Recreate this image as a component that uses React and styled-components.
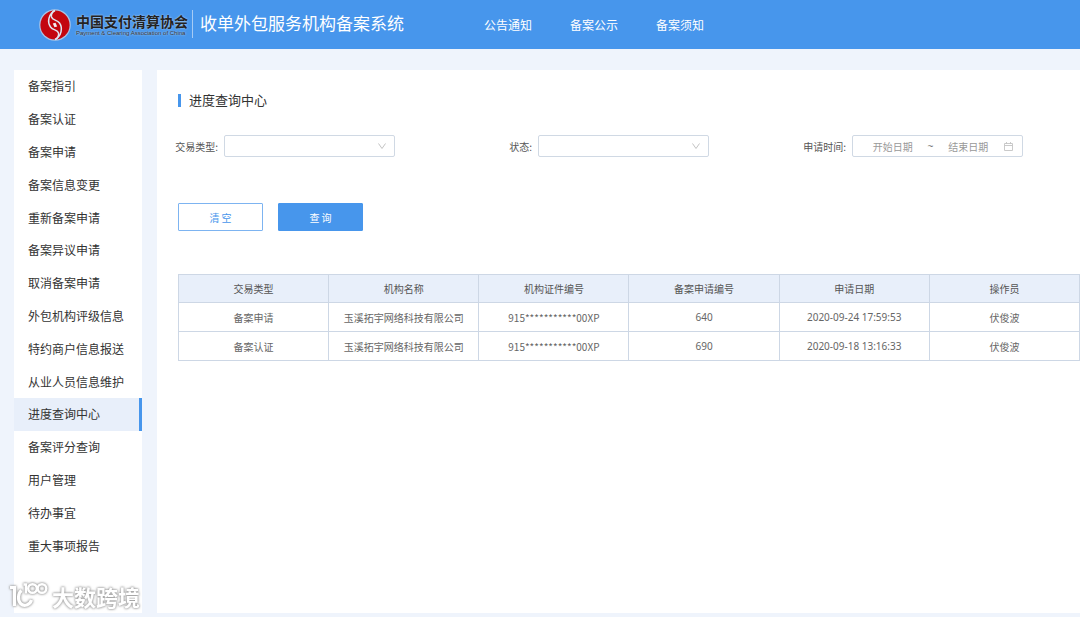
import { useState } from "react";
import styled, { createGlobalStyle } from "styled-components";

const MENU_ITEMS = [
  "备案指引",
  "备案认证",
  "备案申请",
  "备案信息变更",
  "重新备案申请",
  "备案异议申请",
  "取消备案申请",
  "外包机构评级信息",
  "特约商户信息报送",
  "从业人员信息维护",
  "进度查询中心",
  "备案评分查询",
  "用户管理",
  "待办事宜",
  "重大事项报告",
];

const NAV_ITEMS = ["公告通知", "备案公示", "备案须知"];

const COLUMNS = [
  "交易类型",
  "机构名称",
  "机构证件编号",
  "备案申请编号",
  "申请日期",
  "操作员",
];

const ROWS = [
  {
    type: "备案申请",
    org: "玉溪拓宇网络科技有限公司",
    cert: "915***********00XP",
    no: "640",
    date: "2020-09-24 17:59:53",
    operator: "伏俊波",
  },
  {
    type: "备案认证",
    org: "玉溪拓宇网络科技有限公司",
    cert: "915***********00XP",
    no: "690",
    date: "2020-09-18 13:16:33",
    operator: "伏俊波",
  },
];

const AssociationLogo = () => (
  <LogoMark viewBox="0 0 32 32" aria-hidden="true">
    <circle cx="16" cy="16" r="15.8" fill="#a9c4e6" />
    <circle cx="16" cy="16" r="14.6" fill="#c3060f" />
    <g fill="none" stroke="#dfe6f2" strokeWidth="1.5">
      <path d="M16 1.500C9.500 5 8 13 11.500 18C14 21.500 18.500 20.500 19.500 24C20 26.500 18.500 29 16.500 30.500" />
      <path d="M16 30.500C22.500 27 24 19 20.500 14C18 10.500 13.500 11.500 12.500 8C12 5.500 13.500 3 15.500 1.500" />
    </g>
    <path d="M13.800 14.500L16.500 13.800L18.200 17.500L15.500 18.200Z" fill="#f3eef2" />
  </LogoMark>
);

const ArrowIcon = () => (
  <Arrow viewBox="0 0 10 10" aria-hidden="true">
    <path d="M1.500 2.500L5 7.500L8.500 2.500" fill="none" stroke="#c4c4c4" />
  </Arrow>
);

const CalendarIcon = () => (
  <Calendar viewBox="0 0 10 10" aria-hidden="true">
    <path
      d="M1.500 2.500H9.500V9.500H1.500ZM1.500 4.500H9.500M3.500 1V3M7.500 1V3"
      fill="none"
      stroke="#c4c4c4"
      strokeWidth=".9"
    />
  </Calendar>
);

const App = () => {
  const [active, setActive] = useState("进度查询中心");
  const [type, setType] = useState("");
  const [status, setStatus] = useState("");
  const [start, setStart] = useState("");
  const [end, setEnd] = useState("");

  const onClear = () => {
    setType("");
    setStatus("");
    setStart("");
    setEnd("");
  };

  return (
    <>
      <GlobalStyle />
      <Page>
        <Header>
          <AssociationLogo />
          <Association>
            <AssociationName>中国支付清算协会</AssociationName>
            <AssociationSub>Payment &amp; Clearing Association of China</AssociationSub>
          </Association>
          <SystemName>收单外包服务机构备案系统</SystemName>
          <Nav>
            {NAV_ITEMS.map((item) => (
              <NavLink href="#" key={item}>
                {item}
              </NavLink>
            ))}
          </Nav>
        </Header>
        <Body>
          <Sidebar>
            <Menu>
              {MENU_ITEMS.map((item) => (
                <MenuItem key={item}>
                  <MenuLink
                    href="#"
                    $active={item === active}
                    onClick={() => setActive(item)}
                  >
                    {item}
                  </MenuLink>
                </MenuItem>
              ))}
            </Menu>
          </Sidebar>
          <Content>
            <Title>进度查询中心</Title>
            <Filters>
              <Field>
                <Label htmlFor="type">交易类型:</Label>
                <Control>
                  <Select
                    id="type"
                    value={type}
                    onChange={(e) => setType(e.target.value)}
                  >
                    <option value=""></option>
                  </Select>
                  <ArrowIcon />
                </Control>
              </Field>
              <Field>
                <Label htmlFor="status">状态:</Label>
                <Control>
                  <Select
                    id="status"
                    value={status}
                    onChange={(e) => setStatus(e.target.value)}
                  >
                    <option value=""></option>
                  </Select>
                  <ArrowIcon />
                </Control>
              </Field>
              <Field>
                <Label htmlFor="start">申请时间:</Label>
                <Control>
                  <DateInput
                    id="start"
                    placeholder="开始日期"
                    value={start}
                    onChange={(e) => setStart(e.target.value)}
                  />
                  <Tilde>~</Tilde>
                  <DateInput
                    aria-label="结束日期"
                    placeholder="结束日期"
                    value={end}
                    onChange={(e) => setEnd(e.target.value)}
                  />
                  <CalendarIcon />
                </Control>
              </Field>
            </Filters>
            <Actions>
              <Button type="button" onClick={onClear}>
                清 空
              </Button>
              <Button type="button" $primary>
                查 询
              </Button>
            </Actions>
            <Table>
              <thead>
                <tr>
                  {COLUMNS.map((column) => (
                    <HeadCell key={column}>{column}</HeadCell>
                  ))}
                </tr>
              </thead>
              <tbody>
                {ROWS.map((row) => (
                  <tr key={row.no}>
                    <Cell>{row.type}</Cell>
                    <Cell>{row.org}</Cell>
                    <Cell>{row.cert}</Cell>
                    <Cell $latin>{row.no}</Cell>
                    <Cell $latin>{row.date}</Cell>
                    <Cell>{row.operator}</Cell>
                  </tr>
                ))}
              </tbody>
            </Table>
          </Content>
        </Body>
      </Page>
      <Watermark>
        <WatermarkMark viewBox="0 0 40 30" aria-hidden="true">
          <g fill="none" stroke="#fff" strokeWidth="3.2">
            <path d="M1 6.500H5.500V25" />
            <path d="M12.500 9.500C9 12 8.500 19 11.500 22.500C15 26 21 24 22.500 19" />
            <path d="M14.500 3.500H17V12.500" strokeWidth="2.400" />
            <circle cx="23.500" cy="7.500" r="4.300" strokeWidth="2.400" />
            <circle cx="33" cy="7.500" r="4.300" strokeWidth="2.400" />
          </g>
        </WatermarkMark>
        <WatermarkText>大数跨境</WatermarkText>
      </Watermark>
    </>
  );
};

const GlobalStyle = createGlobalStyle`
  * {
    box-sizing: border-box;
  }
  body {
    margin: 0;
    background: #eff4fc;
    color: #333;
    font-family: "Noto Sans CJK SC", sans-serif;
    font-size: 10px;
  }
  a {
    text-decoration: none;
  }
`;

const Page = styled.div`
  display: flex;
  flex-direction: column;
  min-height: 100vh;
`;

const Header = styled.header`
  display: flex;
  align-items: center;
  height: 49px;
  padding-left: 39px;
  background: #4796ec;
  white-space: nowrap;
`;

const LogoMark = styled.svg`
  flex: none;
  width: 32px;
  height: 32px;
`;

const Association = styled.div`
  display: flex;
  flex-direction: column;
  width: 122px;
  height: 28px;
  padding: 2px 0 0 5px;
  border-right: 1px solid #a6cbf5;
  margin-bottom: 2px;
`;

const AssociationName = styled.span`
  color: #222;
  font-size: 14px;
  font-weight: 700;
  line-height: 18px;
  text-shadow: 0 0 2px #c5daf2;
`;

const AssociationSub = styled.span`
  color: #333;
  font-family: "Liberation Sans", sans-serif;
  font-size: 6px;
  line-height: 7px;
  text-shadow: 0 0 2px #dbe8f7;
`;

const SystemName = styled.span`
  width: 291px;
  padding-left: 7px;
  padding-bottom: 4px;
  color: #fff;
  font-size: 17px;
  line-height: 24px;
`;

const Nav = styled.nav`
  display: flex;
  gap: 38px;
`;

const NavLink = styled.a`
  color: #fff;
  font-size: 12px;
  line-height: 18px;
`;

const Body = styled.div`
  display: flex;
  flex: 1;
  gap: 15px;
  padding: 21px 0 4px 14px;
`;

const Sidebar = styled.aside`
  display: flex;
  flex: none;
  width: 128px;
  background: #fff;
`;

const Menu = styled.ul`
  display: grid;
  grid-auto-rows: 1fr;
  flex: 1;
  margin: 0;
  padding: 0 0 51px;
  list-style: none;
`;

const MenuItem = styled.li`
  display: flex;
`;

const MenuLink = styled.a`
  display: flex;
  flex: 1;
  align-items: center;
  padding-left: 14px;
  border-right: 3px solid ${({ $active }) => ($active ? "#4796ec" : "transparent")};
  background: ${({ $active }) => ($active ? "#e8effa" : "transparent")};
  color: #333;
  font-size: 12px;
  line-height: 18px;
`;

const Content = styled.main`
  flex: 1;
  min-width: 0;
  padding: 20px 0 20px 21px;
  background: #fff;
`;

const Title = styled.h1`
  display: flex;
  align-items: center;
  gap: 8px;
  margin: 0;
  font-size: 13px;
  font-weight: 400;
  line-height: 20px;

  &::before {
    content: "";
    width: 3px;
    height: 13px;
    background: #4796ec;
  }
`;

const Filters = styled.form`
  display: flex;
  justify-content: space-between;
  margin: 25px 57px 0 -4px;
`;

const Field = styled.div`
  display: flex;
  align-items: center;
`;

const Label = styled.label`
  width: 50px;
  padding-right: 6px;
  color: #555;
  text-align: right;
  white-space: nowrap;
`;

const Control = styled.div`
  display: flex;
  align-items: center;
  position: relative;
  width: 171px;
  height: 22px;
  border: 1px solid #d0d9e4;
  border-radius: 2px;
`;

const Select = styled.select`
  width: 100%;
  height: 100%;
  padding: 0 24px 0 8px;
  border: 0;
  background: transparent;
  appearance: none;
  color: #555;
  font: inherit;
`;

const Arrow = styled.svg`
  position: absolute;
  right: 7px;
  width: 10px;
  height: 10px;
  pointer-events: none;
`;

const DateInput = styled.input`
  flex: 1;
  min-width: 0;
  padding: 0;
  border: 0;
  background: transparent;
  color: #555;
  font: inherit;
  text-align: center;

  &:first-child {
    margin-left: 5px;
  }
  &::placeholder {
    color: #999;
  }
`;

const Tilde = styled.span`
  color: #777;
  font-family: "Liberation Sans", sans-serif;
`;

const Calendar = styled.svg`
  flex: none;
  width: 10px;
  height: 10px;
  margin-right: 9px;
`;

const Actions = styled.div`
  display: flex;
  gap: 15px;
  margin-top: 46px;
`;

const Button = styled.button`
  width: 85px;
  height: 28px;
  padding: 0;
  border: 1px solid ${({ $primary }) => ($primary ? "#4796ec" : "#7db4f1")};
  border-radius: 1px;
  background: ${({ $primary }) => ($primary ? "#4796ec" : "#fff")};
  color: ${({ $primary }) => ($primary ? "#fff" : "#4796ec")};
  font: inherit;
  cursor: pointer;
`;

const Table = styled.table`
  width: 100%;
  margin-top: 43px;
  border-collapse: collapse;
  table-layout: fixed;
`;

const HeadCell = styled.th`
  height: 28px;
  padding: 0;
  border: 1px solid #cdd7e5;
  background: #e8effa;
  color: #555;
  font-weight: 400;
`;

const Cell = styled.td`
  height: 29px;
  padding: 0;
  border: 1px solid #cdd7e5;
  color: #666;
  font-family: ${({ $latin }) => ($latin ? '"Noto Sans"' : '"Noto Sans CJK SC"')}, sans-serif;
  text-align: center;
`;

const Watermark = styled.div`
  display: flex;
  align-items: center;
  gap: 3px;
  position: fixed;
  bottom: 6px;
  left: 9px;
  filter: drop-shadow(0 0 1px #999) drop-shadow(0 0 1px #bbb);
  pointer-events: none;
`;

const WatermarkMark = styled.svg`
  width: 40px;
  height: 30px;
`;

const WatermarkText = styled.span`
  color: #fff;
  font-size: 22px;
  font-weight: 700;
  line-height: 28px;
`;

export default App;
